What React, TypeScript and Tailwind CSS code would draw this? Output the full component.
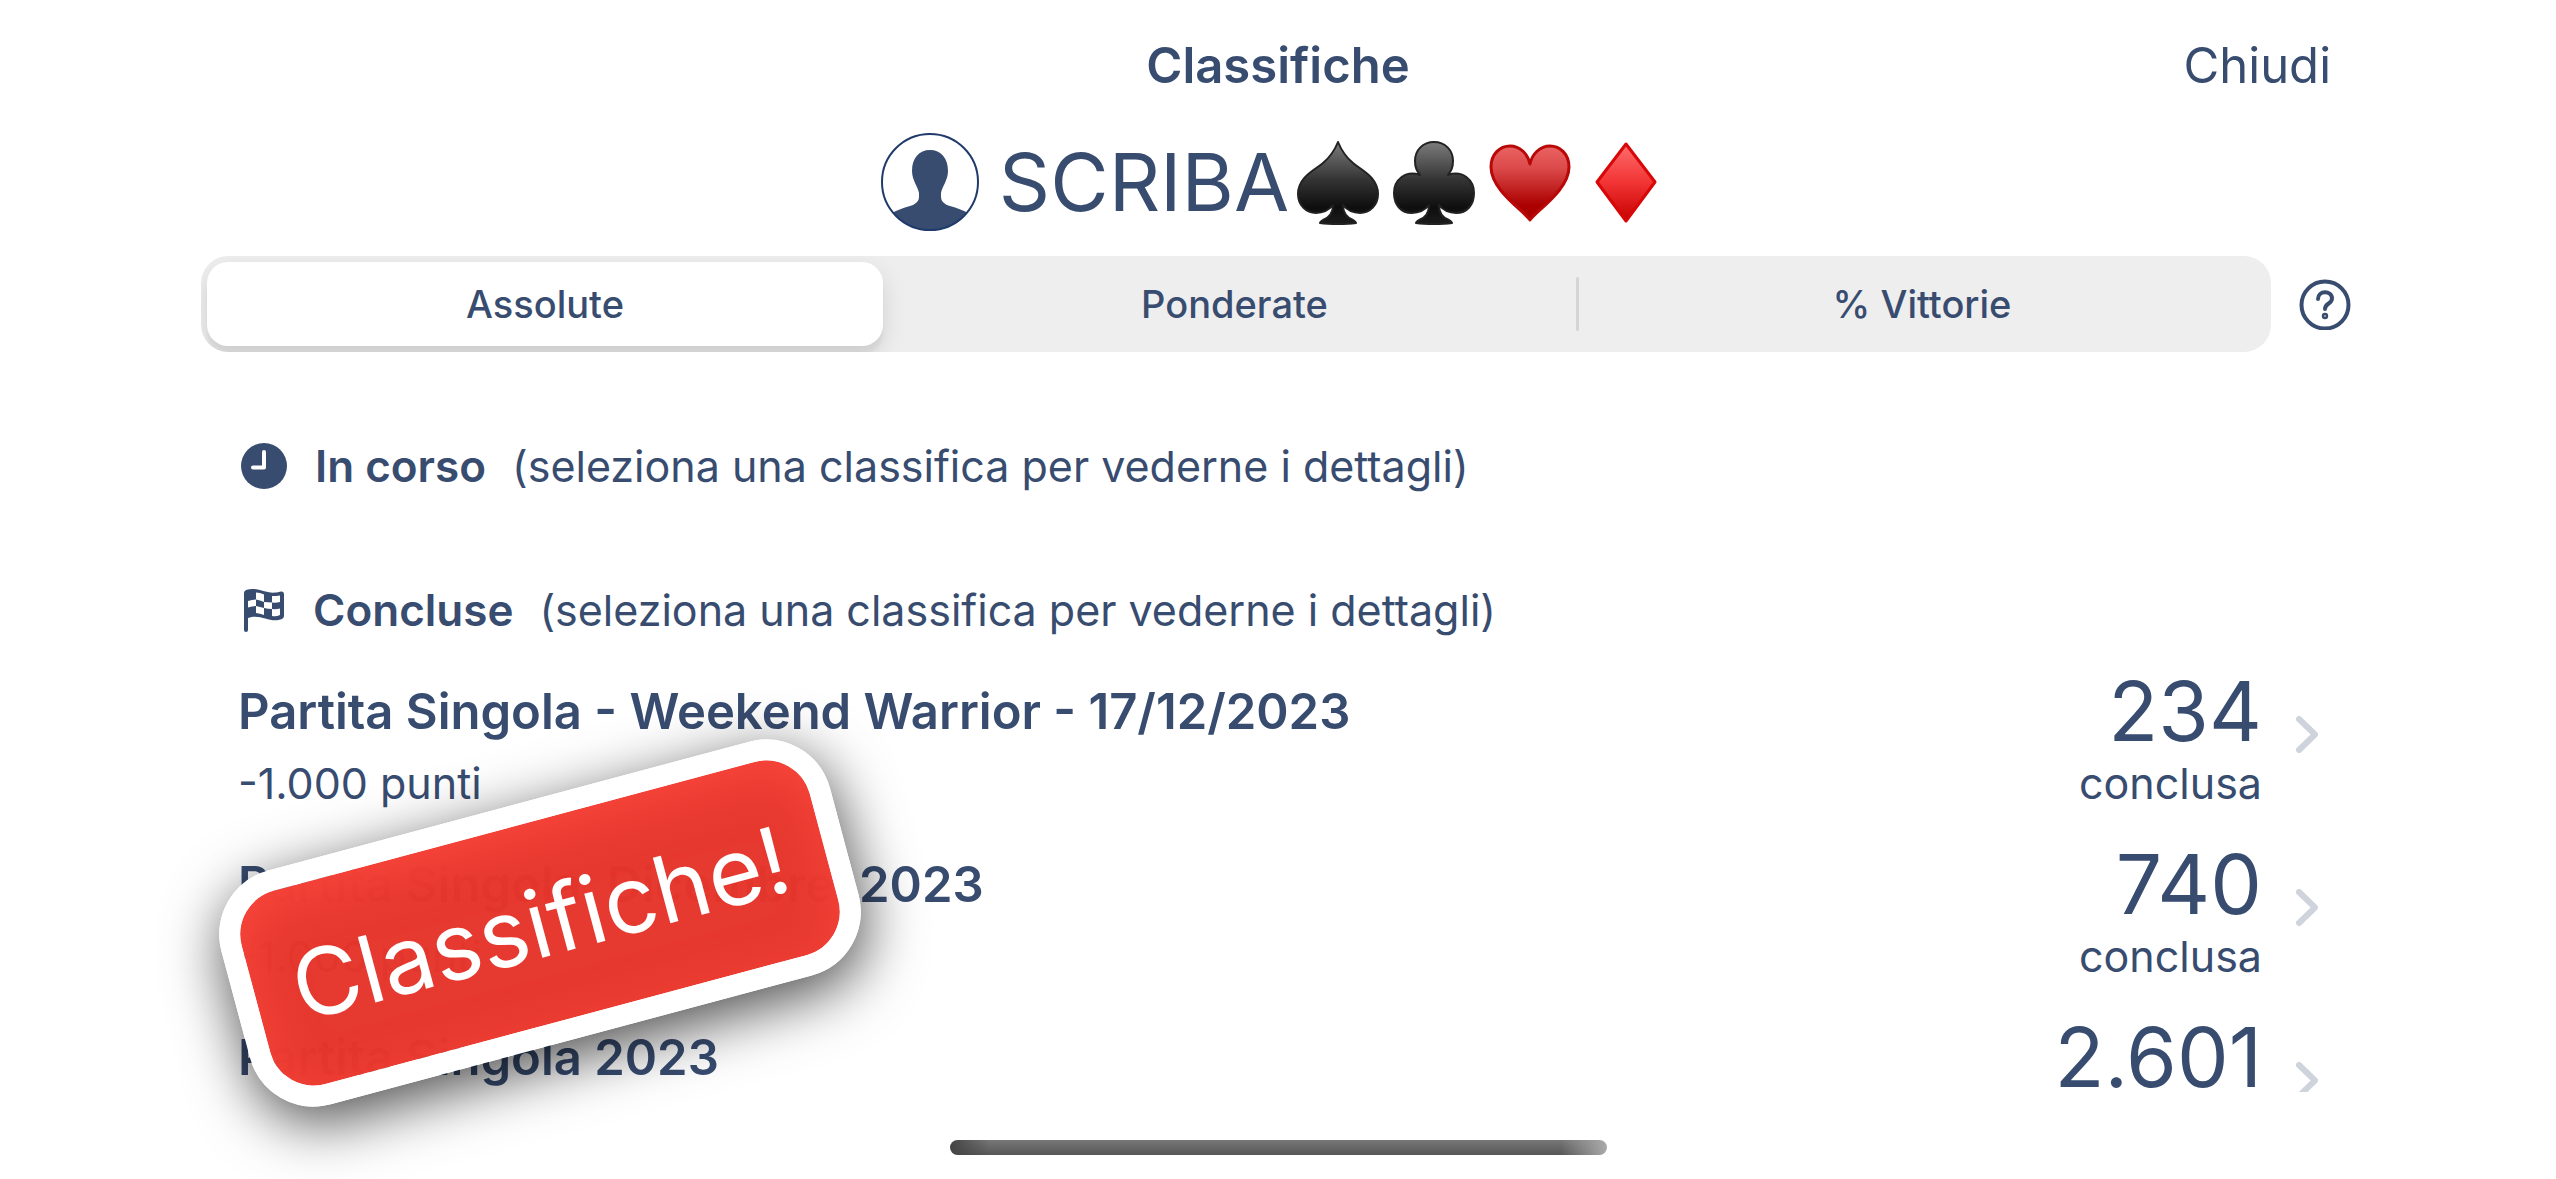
import { useState } from "react";

const tabs = ["Assolute", "Ponderate", "% Vittorie"];

const rankings = [
  { name: "Partita Singola - Weekend Warrior - 17/12/2023", points: "-1.000 punti", rank: "234" },
  { name: "Partita Singola  Dicembre  2023", points: "-1.000 punti", rank: "740" },
  { name: "Partita Singola 2023", points: "", rank: "2.601" },
];

function Avatar() {
  return (
    <svg viewBox="0 0 98 98" className="size-[98px]" aria-hidden="true">
      <clipPath id="avatar">
        <circle cx="49" cy="49" r="48" />
      </clipPath>
      <path
        clipPath="url(#avatar)"
        fill="#384c70"
        d="M49 17C60 17 67 25 67 38C67 47 61 54 60 60V64C60 69 65 72 69 73C76 75 82 77 87 80V98H11V80C16 77 22 75 29 73C33 72 38 69 38 64V60C37 54 31 47 31 38C31 25 38 17 49 17Z"
      />
      <circle cx="49" cy="49" r="48" fill="none" stroke="#1f3a6b" strokeWidth="2" />
    </svg>
  );
}

function Suits() {
  return (
    <svg viewBox="0 0 368 96" className="h-24 w-[368px]" role="img" aria-label="Picche, fiori, cuori, quadri">
      <defs>
        <linearGradient id="black" x1="0" y1="0" x2="0" y2="1">
          <stop offset="0" stopColor="#7c7c7c" />
          <stop offset="0.45" stopColor="#353535" />
          <stop offset="0.8" stopColor="#0e0e0e" />
          <stop offset="1" stopColor="#1c1c1c" />
        </linearGradient>
        <linearGradient id="heart" x1="0" y1="0" x2="0" y2="1">
          <stop offset="0" stopColor="#ea6363" />
          <stop offset="0.3" stopColor="#dc4a4a" />
          <stop offset="0.8" stopColor="#ab0000" />
        </linearGradient>
        <linearGradient id="diamond" x1="0" y1="0" x2="0" y2="1">
          <stop offset="0" stopColor="#ff6d6d" />
          <stop offset="0.5" stopColor="#f23434" />
          <stop offset="1" stopColor="#c60000" />
        </linearGradient>
      </defs>
      <g strokeWidth="2" strokeLinejoin="round">
        <path
          fill="url(#black)"
          stroke="#222"
          d="M49 8C53 18 58 24 64 29C72 36 89 43 89 60C89 71 81 79 71 79C64 79 58 76 54 71C54 80 59 84 64 86Q67 88 67 89Q60 90 49 90Q38 90 31 89Q31 88 34 86C39 84 44 80 44 71C40 76 34 79 27 79C17 79 9 71 9 60C9 43 26 36 34 29C40 24 45 18 49 8Z"
        />
        <path
          fill="url(#black)"
          stroke="#222"
          d="M145 8C156 8 164 16 164 27C164 34 162 37 159 41C174 36 185 46 185 59C185 71 178 79 167 79C160 79 154 76 150 71C150 80 154 84 160 86Q163 88 163 89Q156 90 145 90Q134 90 127 89Q127 88 130 86C136 84 140 80 140 71C136 76 130 79 123 79C112 79 105 71 105 59C105 46 116 36 131 41C128 37 126 34 126 27C126 16 134 8 145 8Z"
        />
        <path
          fill="url(#heart)"
          stroke="#b80808"
          strokeWidth="3"
          d="M241 86C234 76 202 56 202 33C202 20 211 12 221 12C231 12 239 20 241 30C243 20 251 12 261 12C271 12 280 20 280 33C280 56 248 76 241 86Z"
        />
        <path fill="url(#diamond)" stroke="#d90808" strokeWidth="3" d="M337 10L366 48L337 87L308 48Z" />
      </g>
    </svg>
  );
}

function HelpIcon() {
  return (
    <svg viewBox="0 0 52 52" className="size-[52px]" fill="none" stroke="currentColor" strokeWidth="4" strokeLinecap="round">
      <circle cx="26" cy="27" r="23.500" />
      <path d="M19 21C19 12 33 12 33 20.500C33 26 26 25 26 31" />
      <circle cx="26" cy="38" r="1.200" />
    </svg>
  );
}

function ClockIcon() {
  return (
    <svg viewBox="0 0 46 46" className="size-[46px]" aria-hidden="true">
      <circle cx="23" cy="23" r="23" fill="currentColor" />
      <path d="M23 9V24.500H12" fill="none" stroke="white" strokeWidth="4" strokeLinecap="round" strokeLinejoin="round" />
    </svg>
  );
}

function FlagIcon() {
  return (
    <svg viewBox="0 0 44 46" className="h-[46px] w-11" aria-hidden="true">
      <path
        fill="currentColor"
        d="M3 6Q3 4 5 3C18 -1 25 9 40 4.500Q43 4 43 7V29Q43 31 41 32C29 37 20 26 7 31V43Q7 45 5 45Q3 45 3 43Z"
      />
      <g fill="white">
        <path d="M15 5.500Q19 5.500 23 7.500V15Q19 13 15 12.500Z" />
        <path d="M31 9Q35 9 39 8.500V15Q35 16 31 15.500Z" />
        <path d="M7 14Q11 12.500 15 12.500V19Q11 19 7 20.500Z" />
        <path d="M23 15Q27 15 31 15.500V22Q27 22 23 21Z" />
        <path d="M15 19Q19 20 23 21V28Q19 26.500 15 26Z" />
        <path d="M31 22Q35 22.500 39 21.500V28Q35 30 31 29Z" />
      </g>
    </svg>
  );
}

function Chevron() {
  return (
    <svg viewBox="0 0 22 37" className="h-[37px] w-[22px]" aria-hidden="true">
      <path d="M3 3L19 18.500L3 34" fill="none" stroke="#ced3dc" strokeWidth="6" strokeLinecap="round" strokeLinejoin="round" />
    </svg>
  );
}

function SectionTitle({ icon, title }: { icon: React.ReactNode; title: string }) {
  return (
    <div className="flex h-[110px] items-center pl-[3px] text-[43px]">
      {icon}
      <h2 className="ml-7 text-[44px] font-semibold">{title}</h2>
      <p className="ml-[26px]">(seleziona una classifica per vederne i dettagli)</p>
    </div>
  );
}

export default function App() {
  const [active, setActive] = useState("Assolute");

  return (
    <div className="relative flex h-screen flex-col overflow-hidden bg-white font-[Inter,'Liberation_Sans',sans-serif] text-[#384c70]">
      <header className="grid h-[132px] shrink-0 grid-cols-3 items-center px-[225px] text-[49px]">
        <h1 className="col-start-2 text-center font-semibold">Classifiche</h1>
        <button className="justify-self-end">Chiudi</button>
      </header>

      <div className="flex h-[100px] shrink-0 items-center justify-center pr-[18px]">
        <Avatar />
        <span className="ml-5 text-[80px] leading-none">SCRIBA</span>
        <Suits />
      </div>

      <div className="mt-6 flex shrink-0 items-center gap-7 pr-[205px] pl-[201px]">
        <div role="tablist" className="grid h-24 flex-1 grid-cols-3 overflow-hidden rounded-[27px] bg-[#eeeeee] p-1.5 text-[38px] font-medium">
          {tabs.map((tab, i) => (
            <button
              key={tab}
              role="tab"
              aria-selected={tab === active}
              onClick={() => setActive(tab)}
              className={
                tab === active
                  ? "mr-2.5 rounded-[21px] bg-white shadow-[0_9px_24px_rgba(0,0,0,0.12),0_9px_3px_rgba(0,0,0,0.04)]"
                  : "flex items-center"
              }
            >
              <span className="flex-1">{tab}</span>
              {i === 1 && <span className="h-[54px] w-[3px] rounded bg-[#d5d5d6]" />}
            </button>
          ))}
        </div>
        <button aria-label="Aiuto">
          <HelpIcon />
        </button>
      </div>

      <main className="mt-[59px] min-h-0 flex-1 overflow-hidden px-[238px]">
        <SectionTitle icon={<ClockIcon />} title="In corso" />
        <div className="mt-[34px]">
          <SectionTitle icon={<FlagIcon />} title="Concluse" />
        </div>
        <ul>
          {rankings.map((row) => (
            <li key={row.name} className="h-[173px]">
              <button className="flex w-full items-start text-left">
                <span className="flex-1">
                  <span className="block text-[49px] leading-[94px] font-semibold whitespace-pre">{row.name}</span>
                  <span className="block text-[43px] leading-[48px]">{row.points}</span>
                </span>
                <span className="text-right">
                  <span className="block text-[82px] leading-[94px]">{row.rank}</span>
                  {row.points && <span className="block text-[43px] leading-[48px]">conclusa</span>}
                </span>
                <span className="mt-[51px] ml-[34px]">
                  <Chevron />
                </span>
              </button>
            </li>
          ))}
        </ul>
      </main>

      <footer className="flex h-[87px] shrink-0 justify-center pt-12">
        <div className="h-[15px] w-[657px] rounded-full bg-[linear-gradient(90deg,#444,#4440_6%,#aaa0_93%,#aaa),linear-gradient(#777,#575757)]" />
      </footer>

      <div className="absolute top-[802px] left-[225px] flex h-[242px] w-[630px] -rotate-15 items-center justify-center rounded-[66px] border-[21px] border-white bg-[#e5352b]/98 bg-clip-padding text-[93px] leading-none text-white shadow-[0_16px_60px_rgba(0,0,0,0.7),inset_0_14px_50px_#f9463c]">
        Classifiche!
      </div>
    </div>
  );
}
